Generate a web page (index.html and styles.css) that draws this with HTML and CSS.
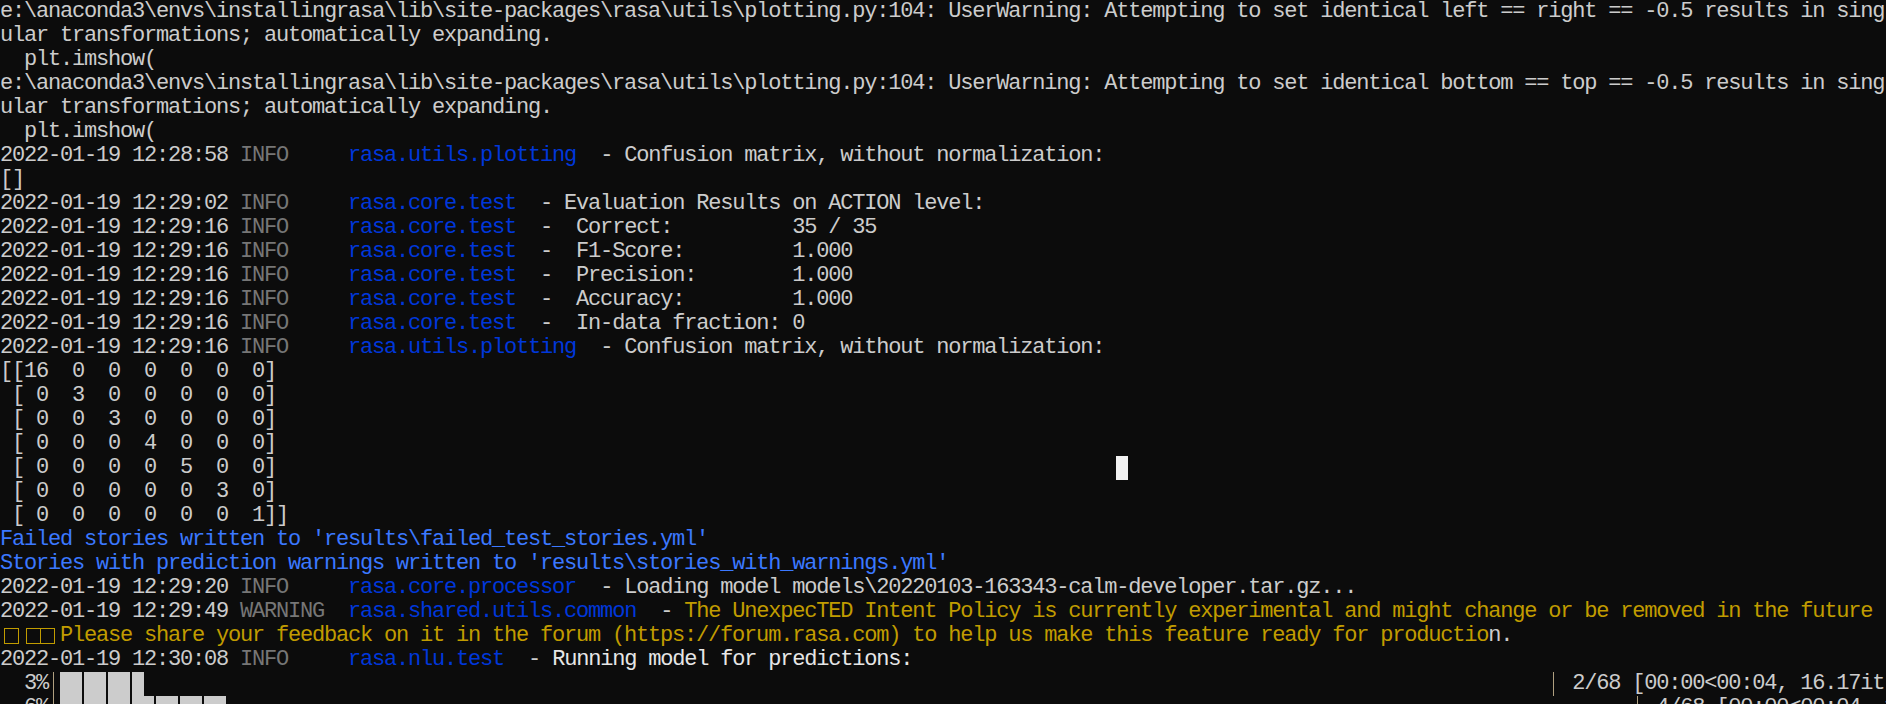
FILE: index.html
```html
<!DOCTYPE html>
<html lang="en">
<head>
    <meta charset="UTF-8">
    <meta name="viewport" content="width=device-width, initial-scale=1.0">
    <title>Command Prompt - rasa test</title>
    <link rel="stylesheet" href="styles.css">
</head>
<body>
    <div class="console">
        <div class="ln">e:\anaconda3\envs\installingrasa\lib\site-packages\rasa\utils\plotting.py:104: UserWarning: Attempting to set identical left == right == -0.5 results in sing</div>
        <div class="ln">ular transformations; automatically expanding.</div>
        <div class="ln">  plt.imshow(</div>
        <div class="ln">e:\anaconda3\envs\installingrasa\lib\site-packages\rasa\utils\plotting.py:104: UserWarning: Attempting to set identical bottom == top == -0.5 results in sing</div>
        <div class="ln">ular transformations; automatically expanding.</div>
        <div class="ln">  plt.imshow(</div>
        <div class="ln">2022-01-19 12:28:58 <span class="dim">INFO</span>     <span class="log">rasa.utils.plotting</span>  - Confusion matrix, without normalization:</div>
        <div class="ln">[]</div>
        <div class="ln">2022-01-19 12:29:02 <span class="dim">INFO</span>     <span class="log">rasa.core.test</span>  - Evaluation Results on ACTION level:</div>
        <div class="ln">2022-01-19 12:29:16 <span class="dim">INFO</span>     <span class="log">rasa.core.test</span>  -  Correct:          35 / 35</div>
        <div class="ln">2022-01-19 12:29:16 <span class="dim">INFO</span>     <span class="log">rasa.core.test</span>  -  F1-Score:         1.000</div>
        <div class="ln">2022-01-19 12:29:16 <span class="dim">INFO</span>     <span class="log">rasa.core.test</span>  -  Precision:        1.000</div>
        <div class="ln">2022-01-19 12:29:16 <span class="dim">INFO</span>     <span class="log">rasa.core.test</span>  -  Accuracy:         1.000</div>
        <div class="ln">2022-01-19 12:29:16 <span class="dim">INFO</span>     <span class="log">rasa.core.test</span>  -  In-data fraction: 0</div>
        <div class="ln">2022-01-19 12:29:16 <span class="dim">INFO</span>     <span class="log">rasa.utils.plotting</span>  - Confusion matrix, without normalization:</div>
        <div class="ln">[[16  0  0  0  0  0  0]</div>
        <div class="ln"> [ 0  3  0  0  0  0  0]</div>
        <div class="ln"> [ 0  0  3  0  0  0  0]</div>
        <div class="ln"> [ 0  0  0  4  0  0  0]</div>
        <div class="ln"> [ 0  0  0  0  5  0  0]                                                                      <span class="cur"></span></div>
        <div class="ln"> [ 0  0  0  0  0  3  0]</div>
        <div class="ln"> [ 0  0  0  0  0  0  1]]</div>
        <div class="ln hi">Failed stories written to 'results\failed_test_stories.yml'</div>
        <div class="ln hi">Stories with prediction warnings written to 'results\stories_with_warnings.yml'</div>
        <div class="ln">2022-01-19 12:29:20 <span class="dim">INFO</span>     <span class="log">rasa.core.processor</span>  - Loading model models\20220103-163343-calm-developer.tar.gz...</div>
        <div class="ln">2022-01-19 12:29:49 <span class="dim">WARNING</span>  <span class="log">rasa.shared.utils.common</span>  - <span class="warn">The UnexpecTED Intent Policy is currently experimental and might change or be removed in the future</span></div>
        <div class="ln warn"><span class="boxes"><span class="box"></span><span class="box"></span><span class="box"></span></span>Please share your feedback on it in the forum (https://forum.rasa.com) to help us make this feature ready for productio<span class="plain">n.</span></div>
        <div class="ln">2022-01-19 12:30:08 <span class="dim">INFO</span>     <span class="log">rasa.nlu.test</span>  - <span class="bright">Running model for predictions:</span></div>
        <div class="ln">  3%<span class="sep"></span><span class="blk"></span><span class="blk"></span><span class="blk"></span><span class="blk half"></span>                                                                                                                     <span class="sep"></span> 2/68 [00:00&lt;00:04, 16.17it</div>
        <div class="ln">  6%<span class="sep"></span><span class="blk"></span><span class="blk"></span><span class="blk"></span><span class="blk"></span><span class="blk"></span><span class="blk"></span><span class="blk"></span>                                                                                                                     <span class="sep"></span> 4/68 [00:00&lt;00:04, 15.5</div>
    </div>
</body>
</html>
```

FILE: styles.css
```css
html, body {
    margin: 0;
    padding: 0;
    background-color: #0c0c0c;
    overflow: hidden;
}

.console {
    width: 1886px;
    height: 704px;
    overflow: hidden;
    font-family: "Liberation Mono", "DejaVu Sans Mono", monospace;
    font-size: 22px;
    letter-spacing: -1.2px;
    color: #cccccc;
}

.ln {
    height: 24px;
    line-height: 24px;
    white-space: pre;
}

.dim {
    color: #767676;
}

.log {
    color: #0037da;
}

.hi {
    color: #3b78ff;
}

.warn {
    color: #c19c00;
}

.plain {
    color: #cccccc;
}

.bright {
    color: #e6e6e6;
}

.cur {
    display: inline-block;
    width: 12px;
    height: 24px;
    vertical-align: top;
    background-color: #f2f2f2;
}

/* missing-glyph boxes */
.boxes {
    display: inline-flex;
    width: 60px;
    height: 24px;
    vertical-align: top;
    align-items: center;
    padding-left: 4px;
    box-sizing: border-box;
}

.box {
    width: 15px;
    height: 16px;
    border: 1px solid #c19c00;
    box-sizing: border-box;
}

.box:nth-child(2) {
    margin-left: 7px;
}

.box:nth-child(3) {
    margin-left: -1px;
}

/* tqdm progress bar */
.sep {
    display: inline-block;
    width: 12px;
    height: 24px;
    vertical-align: top;
    background: linear-gradient(to right, transparent 5px, #b0a080 5px, #b0a080 6px, transparent 6px);
}

.blk {
    display: inline-block;
    width: 24px;
    height: 24px;
    vertical-align: top;
    background-color: #cccccc;
    border-right: 2px solid #0c0c0c;
    box-sizing: border-box;
}

.blk.half {
    width: 12px;
    border-right: none;
}
```
